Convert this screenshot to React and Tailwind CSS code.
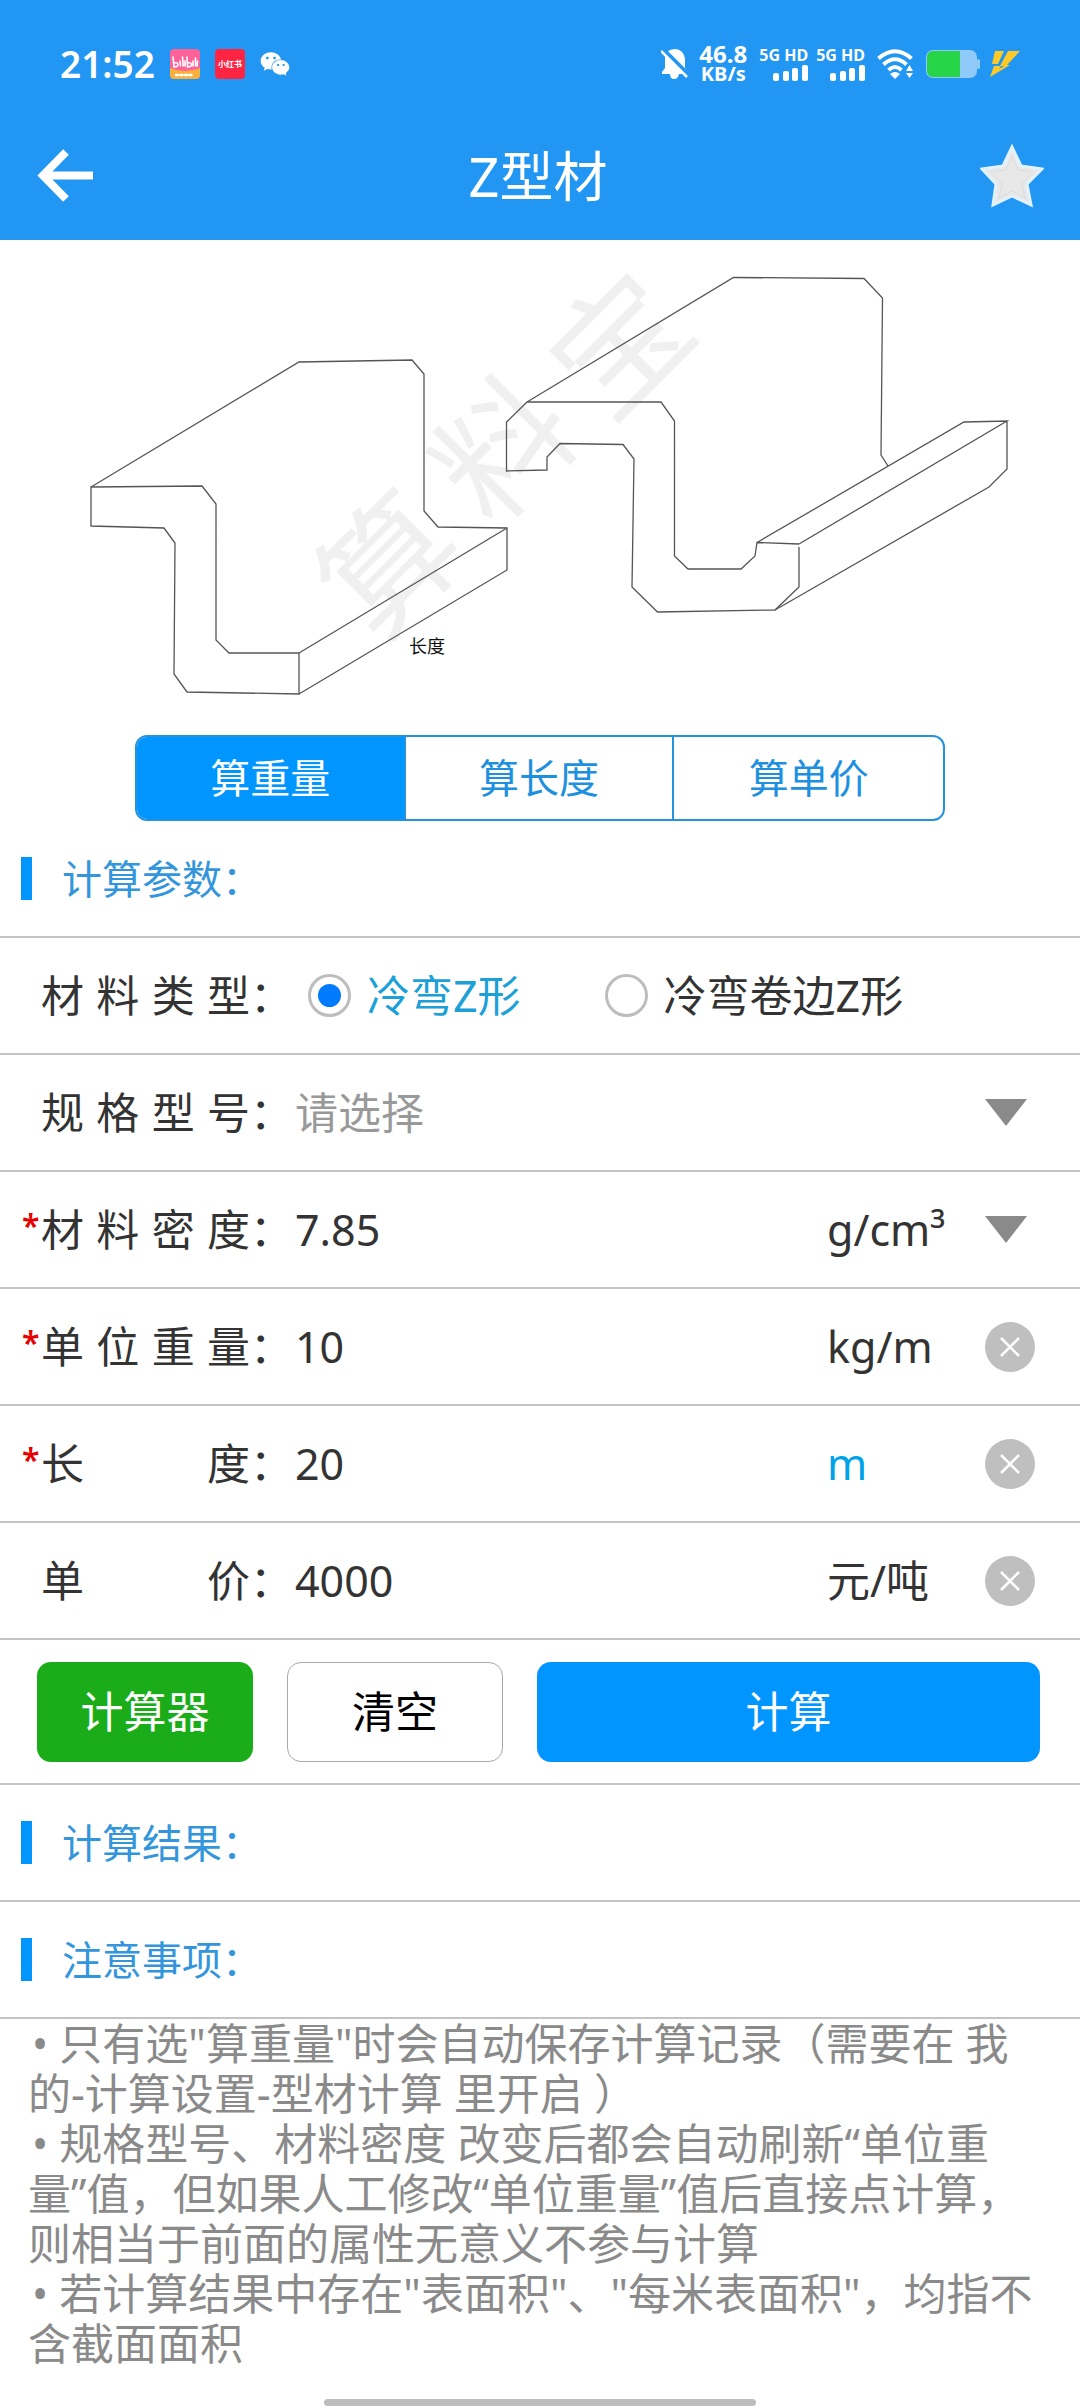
import React, { useState } from 'react';
import { FaWeixin } from 'react-icons/fa';

const TABS = ['算重量', '算长度', '算单价'];
const SHAPES = ['冷弯Z形', '冷弯卷边Z形'];

const NOTES = [
  '只有选"算重量"时会自动保存计算记录（需要在 我的-计算设置-型材计算 里开启 ）',
  '规格型号、材料密度 改变后都会自动刷新“单位重量”值，但如果人工修改“单位重量”值后直接点计算，则相当于前面的属性无意义不参与计算',
  '若计算结果中存在"表面积"、"每米表面积"，均指不含截面面积'
];

const Signal = () => (
  <div className="flex flex-col items-end">
    <span className="text-[16px] leading-4 font-bold">5G HD</span>
    <svg width="35" height="16" viewBox="0 0 35 16" fill="currentColor" className="mt-0.5" aria-hidden="true">
      <rect x="0" y="8" width="6" height="8" rx="2" />
      <rect x="10" y="6" width="6" height="10" rx="2" />
      <rect x="19" y="3" width="6" height="13" rx="2" />
      <rect x="29" y="0" width="6" height="16" rx="2" />
    </svg>
  </div>
);

// Phone status bar: clock and app icons on the left, network and battery on the right
const StatusBar = () => (
  <div className="flex h-32 items-center pr-[60px] pl-[60px]">
    <span className="text-[37px] leading-10 font-semibold">21:52</span>

    <svg width="30" height="30" viewBox="0 0 30 30" className="ml-[15px]" aria-hidden="true">
      <rect width="30" height="30" rx="4" fill="#ff6296" />
      <path d="M0 19Q15 25 30 19V26a4 4 0 0 1-4 4H4a4 4 0 0 1-4-4Z" fill="#fbb03b" />
      <g fill="none" stroke="#fff" strokeWidth="1.6" strokeLinecap="round">
        <path d="M3 8l1 10q4 0 4-2.500t-4-1.500M10 12l.6 5M12.500 8l.8 9M15 12v5M17 8l.5 10q4 0 4-2.500t-4-1.500M23 12v5M25.500 9v8M27.500 12l-.4 5" />
        <path d="M6 26h18" strokeDasharray="2 2.500" strokeWidth="2.500" />
      </g>
    </svg>

    <svg width="30" height="30" viewBox="0 0 30 30" className="ml-[15px]" aria-hidden="true">
      <rect width="30" height="30" rx="4" fill="#ff2442" />
      <text x="15" y="18" textAnchor="middle" fontSize="8" fontWeight="700" fill="#fff">小红书</text>
    </svg>

    <FaWeixin className="ml-[15px] size-[30px]" aria-hidden="true" />

    <div className="ml-auto flex items-center">
      <svg width="28" height="30" viewBox="0 0 28 30" aria-hidden="true">
        <path
          d="M14 0C20 0 24 5 24 11V19L27 23V25H18Q17 30 13 30T9 25H1V23L4 19V10Q4 0 14 0Z"
          fill="currentColor"
        />
        <path d="M2 0L28 26" stroke="#2196f3" strokeWidth="4" />
        <path d="M0 2L26 28" stroke="currentColor" strokeWidth="2.500" />
      </svg>

      <div className="ml-2.5 flex flex-col items-center font-bold">
        <span className="text-[24px] leading-5">46.8</span>
        <span className="text-[20px] leading-5">KB/s</span>
      </div>

      <div className="ml-3 flex gap-2">
        <Signal />
        <Signal />
      </div>

      <svg width="37" height="30" viewBox="0 0 37 30" className="ml-3" aria-hidden="true">
        <g fill="none" stroke="currentColor" strokeWidth="4">
          <path d="M1.500 9.500Q18 -5 34.500 9.500" />
          <path d="M6.500 15.500Q18 5 29.500 15.500" />
          <path d="M11.500 21Q18 15 24.500 21" />
        </g>
        <path d="M13 25Q18 21 23 25L18 30Z" fill="currentColor" />
        <path d="M29 22L32.500 16L36 22ZM29 24H36L32.500 29Z" fill="currentColor" />
      </svg>

      <svg width="54" height="28" viewBox="0 0 54 28" className="ml-3" aria-hidden="true">
        <rect x="0" y="0" width="51" height="28" rx="7" fill="#90caf9" />
        <rect x="51" y="9" width="3" height="10" rx="1.500" fill="#90caf9" />
        <path d="M34 1V27H7a6 6 0 0 1-6-6V7a6 6 0 0 1 6-6Z" fill="#27d548" />
      </svg>

      <svg width="30" height="26" viewBox="0 0 30 26" className="ml-2.5" aria-hidden="true">
        <path d="M5 0H14L8 13H2ZM18 0H30L17 14H20L0 26L4 15H11L9 18L14 15H10Z" fill="#ffc928" />
      </svg>
    </div>
  </div>
);

// Isometric drawing of the two Z profiles
const ProfileDrawing = () => (
  <svg viewBox="0 0 1080 495" className="block w-full overflow-visible" role="img" aria-label="Z型材示意图">
    <g fontSize="132" fill="#f0f0f0" textAnchor="middle">
      <text x="389" y="373" transform="rotate(-45 389 324)">算</text>
      <text x="503" y="257" transform="rotate(-45 503 208)">料</text>
      <text x="620" y="153" transform="rotate(-45 620 104)">宝</text>
    </g>
    <g fill="none" stroke="#555" strokeWidth="1.300">
      <path d="M91 247L202 246L216 264V400L229 413H299V454L187 452L174 434L175 303L164 288L91 286Z" />
      <path d="M91 247L299 122L412 120L424 134V271L438 287L507 288V330L299 454" />
      <path d="M299 413L507 288" />
      <path d="M527 162L506.500 182V231L547 230V217L560 203.500L623 204.500L634 219L632 347L657.500 372L775 370L799 347V307M799 304L757 302.500L755 316L741 329H688L674.500 316V181L661 162H527" />
      <path d="M527 162L733.500 37.500L864 38.500L882.500 58L881 215L888 226" />
      <path d="M757 302.500L964 182L1007 181L799 304M1007 181V229L989 247L775 370" />
    </g>
    <text x="409" y="413" fontSize="18" fill="#111">长度</text>
  </svg>
);

const SectionTitle = ({ children }) => (
  <h2 className="flex h-[117px] items-center border-b-2 border-[#c4c4c4] pl-[21px] text-[40px] leading-[50px] text-[#3396dc]">
    <span className="mr-[30px] h-[43px] w-[11px] bg-[#0095ff]" />
    {children}
  </h2>
);

// One line of the form: required mark, justified label, then the control
const Row = ({ label, htmlFor, required, children }) => {
  const LabelTag = htmlFor ? 'label' : 'span';
  return (
    <div className="flex h-[117px] items-center border-b-2 border-[#c4c4c4] pr-[45px] pl-[22px]">
      <span className="w-[19px] pb-2 text-[32px] leading-[50px] font-semibold text-[#e60000]">{required ? '*' : ''}</span>
      <LabelTag htmlFor={htmlFor} className="flex">
        <span className="w-[209px] [text-align-last:justify]">{label}</span>
        <span>：</span>
      </LabelTag>
      {children}
    </div>
  );
};

const Triangle = () => (
  <svg width="42" height="27" viewBox="0 0 42 27" aria-hidden="true">
    <path d="M0 0H42L21 27Z" fill="#8a8a8a" />
  </svg>
);

const ClearButton = ({ onClick }) => (
  <button type="button" aria-label="清除" onClick={onClick} className="size-[50px] shrink-0 rounded-full bg-[#bfbfbf]">
    <svg viewBox="0 0 50 50" stroke="#fff" strokeWidth="2.500" aria-hidden="true">
      <path d="M16 16L34 34M34 16L16 34" />
    </svg>
  </button>
);

const App = () => {
  const [tab, setTab] = useState(TABS[0]);
  const [shape, setShape] = useState(SHAPES[0]);
  const [values, setValues] = useState({ density: '7.85', weight: '10', length: '20', price: '4000' });

  const setValue = (name, value) => setValues((prev) => ({ ...prev, [name]: value }));

  const renderInput = (name) => (
    <input
      id={name}
      type="text"
      inputMode="decimal"
      value={values[name]}
      onChange={(e) => setValue(name, e.target.value)}
      className="min-w-0 flex-1 pl-0.5 outline-none"
    />
  );

  return (
    <div className="min-h-screen bg-white font-['Noto_Sans','Noto_Sans_CJK_SC',sans-serif] text-[43px] leading-[50px] text-[#333]">
      <header className="bg-[#2196f3] pb-4 text-white">
        <StatusBar />
        <div className="flex h-24 items-center justify-between px-9">
          <button type="button" aria-label="返回">
            <svg width="60" height="60" viewBox="0 0 60 60" fill="none" stroke="currentColor" strokeWidth="8" aria-hidden="true">
              <path d="M30 6L7 29.500L30 53M8 29.500H57" />
            </svg>
          </button>
          <h1 className="text-[54px] leading-[60px]">Z型材</h1>
          <button type="button" aria-label="收藏">
            <svg width="64" height="64" viewBox="0 0 64 64" aria-hidden="true">
              <path
                d="M32 3L41 22L62 25L47 40L51 61L32 52L13 61L16 40L2 25L23 22Z"
                fill="#e8e8e8"
                stroke="#e1f2fd"
                strokeWidth="3"
              />
              <path d="M32 12L38 26L53 28L42 39L45 54L32 47L19 54L22 39L11 28L26 26Z" fill="none" stroke="#dcdcdc" />
            </svg>
          </button>
        </div>
      </header>

      <main>
        <ProfileDrawing />

        <div className="mx-auto grid w-3/4 grid-cols-3 divide-x-2 divide-[#2592dd] overflow-hidden rounded-[12px] border-2 border-[#2592dd]">
          {TABS.map((name) => (
            <button
              key={name}
              type="button"
              aria-pressed={tab === name}
              onClick={() => setTab(name)}
              className={`h-[82px] text-[40px] ${tab === name ? 'bg-[#0095ff] text-white' : 'text-[#1e90e0]'}`}
            >
              {name}
            </button>
          ))}
        </div>

        <SectionTitle>计算参数：</SectionTitle>

        <form onSubmit={(e) => e.preventDefault()}>
          <Row label="材料类型">
            <div className="flex gap-[84px] pl-[15px]">
              {SHAPES.map((name) => (
                <label key={name} className={`flex items-center ${shape === name ? 'text-[#1ba0d8]' : ''}`}>
                  <input
                    type="radio"
                    name="shape"
                    checked={shape === name}
                    onChange={() => setShape(name)}
                    className="mr-4 size-[43px] appearance-none rounded-full border-3 border-[#bdbdbd] bg-white bg-clip-content p-[7px] checked:bg-[#007bff]"
                  />
                  {name}
                </label>
              ))}
            </div>
          </Row>

          <Row label="规格型号" htmlFor="spec">
            <select id="spec" defaultValue="" className="min-w-0 flex-1 appearance-none pl-0.5 text-[#999] outline-none">
              <option value="">请选择</option>
            </select>
            <span className="w-[50px]">
              <Triangle />
            </span>
          </Row>

          <Row label="材料密度" htmlFor="density" required>
            {renderInput('density')}
            <span className="w-[158px]">g/cm³</span>
            <button type="button" aria-label="选择密度" className="w-[50px]">
              <Triangle />
            </button>
          </Row>

          <Row label="单位重量" htmlFor="weight" required>
            {renderInput('weight')}
            <span className="w-[158px]">kg/m</span>
            <ClearButton onClick={() => setValue('weight', '')} />
          </Row>

          <Row label="长度" htmlFor="length" required>
            {renderInput('length')}
            <button type="button" className="w-[158px] text-left text-[#00a2e8]">m</button>
            <ClearButton onClick={() => setValue('length', '')} />
          </Row>

          <Row label="单价" htmlFor="price">
            {renderInput('price')}
            <span className="w-[158px]">元/吨</span>
            <ClearButton onClick={() => setValue('price', '')} />
          </Row>

          <div className="flex h-[145px] items-center gap-[34px] border-b-2 border-[#c4c4c4] pr-10 pl-[37px]">
            <button type="button" className="h-[100px] w-[216px] rounded-[14px] bg-[#1aad19] text-white">计算器</button>
            <button
              type="button"
              onClick={() => setValues({ density: '', weight: '', length: '', price: '' })}
              className="h-[100px] w-[216px] rounded-[14px] border border-[#aaa] text-black"
            >
              清空
            </button>
            <button type="submit" className="h-[100px] flex-1 rounded-[14px] bg-[#0095ff] text-white">计算</button>
          </div>
        </form>

        <SectionTitle>计算结果：</SectionTitle>
        <SectionTitle>注意事项：</SectionTitle>

        <ul className="pr-[38px] pl-[28px] text-[#8a8a8a]">
          {NOTES.map((note) => (
            <li key={note} className="indent-1">{`• ${note}`}</li>
          ))}
        </ul>
      </main>

      {/* Home gesture bar */}
      <div className="mx-auto mt-[30px] h-[7px] w-2/5 rounded-full bg-[#bdbdbd]" />
    </div>
  );
};

export default App;
